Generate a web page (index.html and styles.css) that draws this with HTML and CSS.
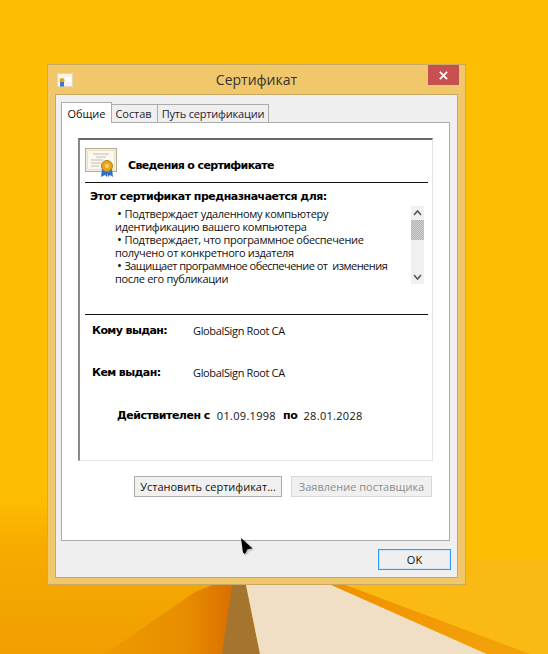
FILE: index.html
```html
<!DOCTYPE html>
<html lang="ru">
<head>
<meta charset="utf-8">
<title>Сертификат</title>
<link rel="stylesheet" href="styles.css">
</head>
<body>
<svg class="wallpaper" viewBox="0 0 548 654" aria-hidden="true">
  <defs>
    <linearGradient id="leftGlow" x1="0" y1="0" x2="0" y2="1">
      <stop offset="0" stop-color="#fdbd00"/>
      <stop offset="0.3" stop-color="#f7ab00"/>
      <stop offset="1" stop-color="#f09f00"/>
    </linearGradient>
    <linearGradient id="darkWedge" x1="0" y1="0" x2="1" y2="0">
      <stop offset="0" stop-color="#ee9a00"/>
      <stop offset="0.6" stop-color="#e88d00"/>
      <stop offset="1" stop-color="#d76a00"/>
    </linearGradient>
    <linearGradient id="rightBand" x1="0" y1="0" x2="1" y2="0.2">
      <stop offset="0" stop-color="#f09000"/>
      <stop offset="1" stop-color="#f2a208"/>
    </linearGradient>
  </defs>
  <rect width="548" height="654" fill="#fdbd00"/>
  <rect y="560" x="300" width="248" height="94" fill="#fbb914"/>
  <polygon points="0,500 300,500 300,654 0,654" fill="url(#leftGlow)"/>
  <polygon points="105,654 195,592 225,580 240,580 222,654" fill="url(#darkWedge)"/>
  <polygon points="233,580 245,580 260,654 222,654" fill="#a5742f"/>
  <polygon points="245,580 320,580 487,654 260,654" fill="#f0dfc4"/>
  <polygon points="320,580 332,580 530,654 487,654" fill="url(#rightBand)"/>
</svg>
<section class="window">
  <header class="titlebar">
    <svg class="title-icon" viewBox="0 0 16 14" aria-hidden="true">
      <rect x="0.5" y="0.5" width="15" height="13" fill="#fbf4e8" stroke="#e6d6bb"/>
      <rect x="8" y="4" width="6" height="5" fill="#fff"/>
      <circle cx="5" cy="7.5" r="2.5" fill="#e8a31e"/>
      <path d="M3 9h2v4.5H3zM5 9h2v4.5H5z" fill="#3f79c4"/>
    </svg>
    <h1 class="title">Сертификат</h1>
    <button class="close" type="button" aria-label="Закрыть">
      <svg viewBox="0 0 10 10" aria-hidden="true"><path d="M1 1l8 8M9 1l-8 8" stroke="#fff" stroke-width="2"/></svg>
    </button>
  </header>
  <div class="client">
    <nav class="tabs">
      <span class="tab tab-active">Общие</span>
      <span class="tab tab-second">Состав</span>
      <span class="tab tab-third">Путь сертификации</span>
    </nav>
    <div class="panel">
      <div class="frame">
        <div class="info-head">
          <svg class="cert-icon" viewBox="0 0 32 30" aria-hidden="true">
            <rect x="0.5" y="0.5" width="31" height="23" fill="#f6f0e4" stroke="#b9a98f"/>
            <rect x="2.5" y="2.5" width="27" height="19" fill="#fbf8f0" stroke="#d6c8ae" stroke-dasharray="1 1"/>
            <path d="M8 6h16M11 9h10M6 12h12M6 15h10M6 18h8" stroke="#c4bcae"/>
            <path d="M17 21l-1 8 4-2 2 2 1-8zM22 21l1 8 2-2 3 2-1-8z" fill="#2f6fc6"/>
            <circle cx="22" cy="18" r="5.5" fill="#e6a520" stroke="#b77f10"/>
            <circle cx="22" cy="18" r="2.2" fill="#f4cf5a"/>
          </svg>
          <h2 class="info-title">Сведения о сертификате</h2>
        </div>
        <div class="rule"></div>
        <h3 class="purpose">Этот сертификат предназначается для:</h3>
        <div class="purpose-box">
          <ul class="purpose-list">
            <li><span class="bullet">•</span>Подтверждает удаленному компьютеру</li>
            <li>идентификацию вашего компьютера</li>
            <li><span class="bullet">•</span>Подтверждает, что программное обеспечение</li>
            <li>получено от конкретного издателя</li>
            <li class="tight"><span class="bullet">•</span>Защищает программное обеспечение от&nbsp; изменения</li>
            <li>после его публикации</li>
          </ul>
          <div class="scrollbar">
            <svg class="arrow" viewBox="0 0 13 14" aria-hidden="true"><path d="M3 9l3.5-4L10 9" fill="none" stroke="#555" stroke-width="1.5"/></svg>
            <div class="thumb"></div>
            <div class="track"></div>
            <svg class="arrow" viewBox="0 0 13 14" aria-hidden="true"><path d="M3 5l3.5 4L10 5" fill="none" stroke="#555" stroke-width="1.5"/></svg>
          </div>
        </div>
        <div class="rule"></div>
        <dl class="issued">
          <div class="issued-row"><dt>Кому выдан:</dt><dd>GlobalSign Root CA</dd></div>
          <div class="issued-row"><dt>Кем выдан:</dt><dd>GlobalSign Root CA</dd></div>
        </dl>
        <p class="validity"><b class="valid-from">Действителен с</b><span class="date">01.09.1998</span><b class="valid-to">по</b><span class="date-end">28.01.2028</span></p>
      </div>
      <div class="panel-actions">
        <button class="btn btn-install" type="button">Установить сертификат...</button>
        <button class="btn btn-disabled" type="button" disabled>Заявление поставщика</button>
      </div>
    </div>
    <div class="footer">
      <button class="btn-ok" type="button">OK</button>
    </div>
  </div>
</section>
<svg class="cursor" viewBox="0 0 12 17" aria-hidden="true"><path d="M0 0l11.5 10.5-5 .5-2.5 5-2-1.5z" fill="#000"/></svg>
</body>
</html>
```
FILE: styles.css
```css
* { box-sizing: border-box; }
html, body { margin: 0; height: 100%; }
body {
  position: relative;
  width: 548px;
  height: 654px;
  overflow: hidden;
  background: #fdbd00;
  font-family: "Open Sans", "Liberation Sans", sans-serif;
  font-size: 11px;
  color: #111;
}
.wallpaper { position: absolute; left: 0; top: 0; width: 548px; height: 654px; }
.window {
  position: absolute;
  left: 47px;
  top: 64px;
  width: 419px;
  height: 521px;
  background: #f0c76b;
  border: 1px solid #c8a862;
  display: flex;
  flex-direction: column;
}
.titlebar { position: relative; height: 29px; flex: none; display: flex; justify-content: center; align-items: center; }
.title { margin: 0; font-size: 14px; font-weight: 400; color: #333; font-family: "Open Sans", sans-serif; }
.title-icon { position: absolute; left: 9px; top: 8px; width: 16px; height: 14px; }
.close {
  position: absolute;
  right: 6px;
  top: 0;
  width: 31px;
  height: 20px;
  border: 0;
  padding: 0;
  background: #c75050;
  display: flex;
  align-items: center;
  justify-content: center;
}
.close svg { width: 9px; height: 9px; }
.client {
  margin: 0 7px 6px 7px;
  flex: 1;
  background: #efefef;
  border: 1px solid #c9a75f;
  padding: 7px 6px 0 5px;
  display: flex;
  flex-direction: column;
}
.tabs { display: flex; height: 20px; flex: none; align-items: flex-end; position: relative; z-index: 1; }
.tab {
  height: 18px;
  background: #efefef;
  border: 1px solid #acacac;
  border-bottom: 0;
  margin-left: -1px;
  display: flex;
  align-items: center;
  justify-content: center;
  color: #223;
  letter-spacing: -0.05px;
}
.tab-active { height: 21px; margin: 0 0 -1px 0; width: 51px; background: #fff; color: #111; }
.tab-second { width: 47px; padding-right: 2px; }
.tab-third { width: 112px; letter-spacing: -0.2px; }
.panel {
  position: relative;
  height: 419px;
  width: 389px;
  flex: none;
  background: #fff;
  border: 1px solid #acacac;
  padding: 15px 16px 0 16px;
}
.frame {
  height: 323px;
  border-top: 2px solid #696969;
  border-left: 2px solid #8a8a8a;
  border-right: 1px solid #e3e3e3;
  border-bottom: 1px solid #e3e3e3;
  display: flex;
  flex-direction: column;
}
.info-head { height: 42px; padding: 8px 0 0 5px; display: flex; align-items: flex-start; gap: 11px; flex: none; }
.cert-icon { width: 32px; height: 30px; flex: none; }
.info-title { margin: 11px 0 0; font: 700 11px "DejaVu Sans", sans-serif; letter-spacing: -0.63px; color: #000; }
.rule { height: 1px; background: #111; margin-left: 5px; width: 343px; flex: none; }
.purpose { margin: 7px 0 0 10px; font: 700 11px/13px "DejaVu Sans", sans-serif; letter-spacing: -0.5px; color: #000; }
.purpose-box { position: relative; height: 111px; flex: none; }
.purpose-list { margin: 0; padding: 4px 0 0 35px; list-style: none; line-height: 13px; letter-spacing: -0.3px; }
.tight { letter-spacing: -0.52px; }
.bullet { font-size: 13px; line-height: 13px; margin: 0 3px 0 2px; color: #000; }
.scrollbar {
  position: absolute;
  left: 331px;
  top: 3px;
  width: 13px;
  height: 78px;
  background: #f0f0f0;
  display: flex;
  flex-direction: column;
}
.arrow { width: 13px; height: 14px; flex: none; }
.thumb { height: 20px; flex: none; background: repeating-conic-gradient(#d0d0d0 0 25%, #b4b4b4 0 50%) 0 0 / 2px 2px; }
.track { flex: 1; }
.issued { margin: 8px 0 0; }
.issued-row { display: flex; height: 42px; align-items: flex-start; padding: 0 0 0 12px; }
.issued-row dt { width: 101px; font: 700 11px/15px "DejaVu Sans", sans-serif; letter-spacing: -0.6px; color: #000; }
.issued-row dd { margin: 0; line-height: 15px; letter-spacing: -0.35px; }
.validity { margin: 1px 0 0 37px; line-height: 15px; display: flex; }
.valid-from, .valid-to { font: 700 11px/15px "DejaVu Sans", sans-serif; letter-spacing: -0.5px; color: #000; }
.date { margin-left: 7px; letter-spacing: .3px; }
.valid-to { margin: 0 6px 0 7px; letter-spacing: -0.3px; }
.date-end { letter-spacing: .3px; }
.panel-actions { display: flex; gap: 9px; padding: 15px 0 0 56px; }
.btn {
  height: 21px;
  padding: 0;
  font: 11px "Open Sans", sans-serif;
  background: #f0f0f0;
  border: 1px solid #adadad;
  color: #111;
}
.btn-install { width: 148px; }
.btn-disabled { width: 141px; color: #8d8d8d; border-color: #d9d9d9; }
.footer { display: flex; justify-content: flex-end; padding: 8px 0 0; }
.btn-ok {
  width: 73px;
  height: 21px;
  padding: 0;
  font: 11px "Open Sans", sans-serif;
  background: #efefef;
  border: 1px solid #3399ff;
  box-shadow: inset 0 0 0 1px #cfe5fb;
  color: #111;
}
.cursor { position: absolute; left: 241px; top: 538px; width: 12px; height: 17px; filter: drop-shadow(1px 1px 1px rgba(0,0,0,.35)); }
```
